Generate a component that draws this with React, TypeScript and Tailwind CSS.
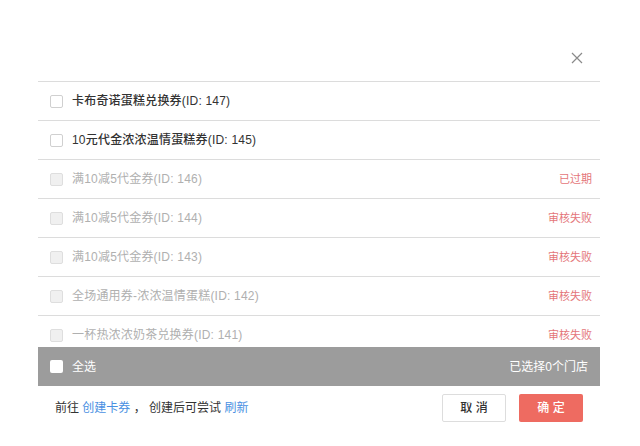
import React from "react";

const rows = [
  { name: "卡布奇诺蛋糕兑换券(ID: 147)", status: "", disabled: false },
  { name: "10元代金浓浓温情蛋糕券(ID: 145)", status: "", disabled: false },
  { name: "满10减5代金券(ID: 146)", status: "已过期", disabled: true },
  { name: "满10减5代金券(ID: 144)", status: "审核失败", disabled: true },
  { name: "满10减5代金券(ID: 143)", status: "审核失败", disabled: true },
  { name: "全场通用券-浓浓温情蛋糕(ID: 142)", status: "审核失败", disabled: true },
  { name: "一杯热浓浓奶茶兑换券(ID: 141)", status: "审核失败", disabled: true },
];

export default function App() {
  return (
    <div
      className="w-[640px] h-[446px] bg-white overflow-hidden"
      style={{ fontFamily: '"Liberation Sans", "Noto Sans CJK SC", sans-serif' }}
    >
      <div className="ml-[38px] mr-[40px] h-[81px] flex justify-end items-start pt-[52px] pr-[17px]">
        <svg width="12" height="12" viewBox="0 0 12 12" className="text-[#8a8a8a]">
          <path d="M1 1 L11 11 M11 1 L1 11" stroke="currentColor" strokeWidth="1.2" fill="none" />
        </svg>
      </div>
      <div className="ml-[38px] mr-[40px] h-[266px] overflow-hidden border-t-[1px] border-[#dcdcdc]">
        {rows.map((r, i) => (
          <div
            key={i}
            className="h-[39px] flex items-center border-b border-[#dcdcdc] pl-[12px] pr-[8px]"
          >
            <span
              className={
                r.disabled
                  ? "w-[13px] h-[13px] rounded-[2px] border border-[#dedede] bg-[#f0f0f0] shrink-0"
                  : "w-[13px] h-[13px] rounded-[2px] border border-[#d0d0d0] bg-white shrink-0"
              }
            />
            <span
              className={
                r.disabled
                  ? "ml-[9px] text-[12px] tracking-[0.2px] text-[#b0b0b0]"
                  : "ml-[9px] text-[12px] tracking-[0.2px] text-[#333333] font-medium"
              }
            >
              {r.name}
            </span>
            <span className="ml-auto text-[11px] text-[#e4767a]">{r.status}</span>
          </div>
        ))}
      </div>
      <div className="ml-[38px] mr-[40px] h-[39px] bg-[#9c9c9c] flex items-center pl-[12px] pr-[12px]">
        <span className="w-[13px] h-[13px] rounded-[2px] bg-white shrink-0" />
        <span className="ml-[9px] text-[12px] text-white">全选</span>
        <span className="ml-auto text-[12px] text-white">已选择0个门店</span>
      </div>
      <div className="ml-[38px] mr-[40px] pt-[8px] flex items-center pl-[17px] pr-[17px]">
        <span className="text-[12px] text-[#333333]">
          前往 <span className="text-[#4a90e2]">创建卡券</span> ， 创建后可尝试{" "}
          <span className="text-[#4a90e2]">刷新</span>
        </span>
        <div className="ml-auto flex gap-[13px]">
          <button className="w-[64px] h-[28px] rounded-[2px] border border-[#dddddd] bg-white text-[12px] text-[#333333] font-medium">
            取 消
          </button>
          <button className="w-[64px] h-[28px] rounded-[2px] bg-[#ee6b61] text-[12px] text-white font-medium">
            确 定
          </button>
        </div>
      </div>
    </div>
  );
}
